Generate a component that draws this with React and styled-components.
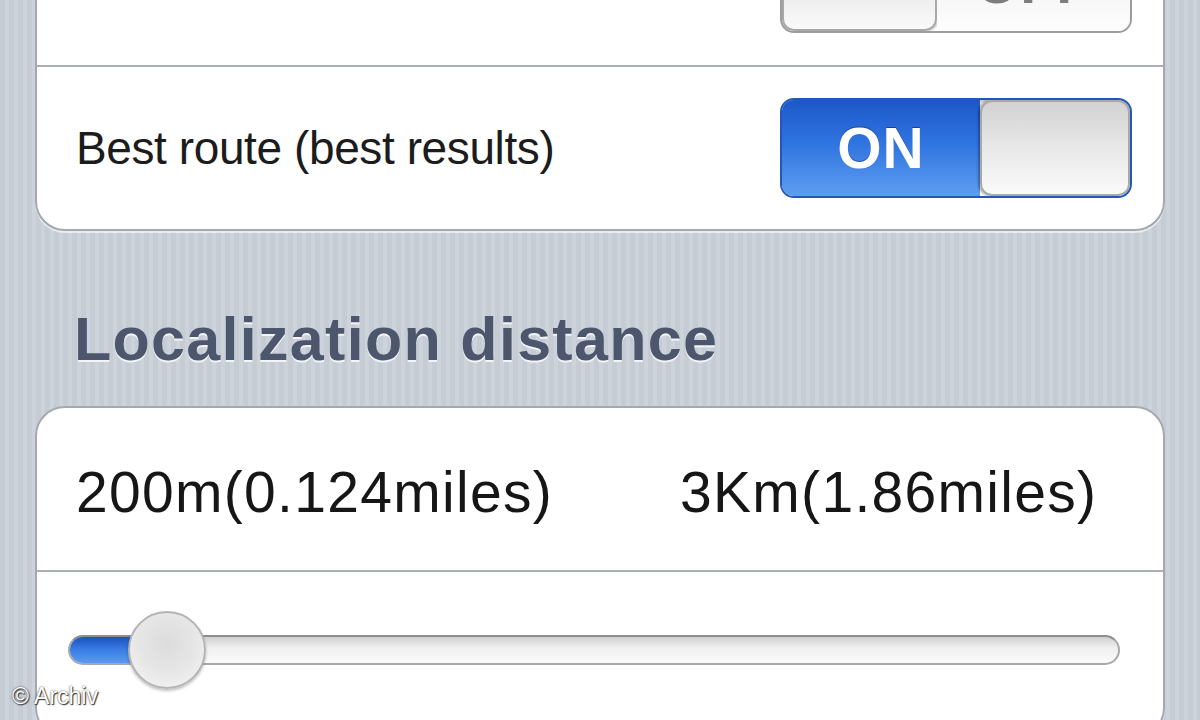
import React from 'react';
import styled, { createGlobalStyle } from 'styled-components';

const GlobalStyle = createGlobalStyle`
  html, body {
    margin: 0;
    padding: 0;
  }
  body {
    font-family: "Liberation Sans", Arial, sans-serif;
    background: #c8cfd7;
  }
`;

// pinstripe table background like the old iOS grouped settings
const Screen = styled.div`
  position: relative;
  width: 1200px;
  height: 720px;
  overflow: hidden;
  background: repeating-linear-gradient(
    90deg,
    #c5ccd4 0px,
    #c5ccd4 5px,
    #cdd3da 5px,
    #cdd3da 9px
  );
`;

const Column = styled.div`
  display: flex;
  flex-direction: column;
  padding: 0 35px;
  margin-top: -101px;
`;

const Card = styled.div`
  background: #fff;
  border: 2px solid #a4a9b0;
  border-radius: 30px;
  box-shadow: 0 2px 0 rgba(255, 255, 255, 0.6);
  overflow: hidden;
`;

const Row = styled.div`
  display: flex;
  align-items: center;
  justify-content: space-between;
  height: ${p => p.$h || 162}px;
  padding: 0 31px 0 39px;
  border-top: ${p => (p.$first ? 'none' : '2px solid #acb0b5')};
`;

const Label = styled.span`
  font-size: 46px;
  letter-spacing: -0.4px;
  color: #1c1c1c;
  transform: translateY(${p => p.$dy || 0}px);
`;

const SwitchBox = styled.div`
  display: flex;
  width: 352px;
  height: 100px;
  border-radius: 14px;
  overflow: hidden;
  box-sizing: border-box;
  border: 2px solid ${p => (p.$on ? '#2458b8' : '#9c9c9c')};
  flex-direction: ${p => (p.$on ? 'row' : 'row-reverse')};
  box-shadow: inset 0 2px 3px rgba(0, 0, 0, 0.25);
`;

const SwitchSide = styled.div`
  flex: 1;
  display: flex;
  align-items: center;
  justify-content: center;
  font-size: 57px;
  font-weight: bold;
  letter-spacing: 1px;
  color: ${p => (p.$on ? '#fff' : '#7d7d7d')};
  background: ${p =>
    p.$on
      ? 'linear-gradient(180deg, #1d58c9 0%, #2f74e0 45%, #5e9df0 100%)'
      : 'linear-gradient(180deg, #e6e6e6 0%, #f4f4f4 50%, #fdfdfd 100%)'};
  text-shadow: ${p => (p.$on ? '0 -1px 0 rgba(0,0,50,0.4)' : 'none')};
`;

const SwitchKnob = styled.div`
  width: ${p => p.$w}px;
  flex: none;
  box-sizing: border-box;
  border-radius: 12px;
  border: 2px solid #a8a8a8;
  background: linear-gradient(180deg, #d2d2d2 0%, #e8e8e8 50%, #fafafa 100%);
  box-shadow: ${p => (p.$on ? '-2px 0 2px rgba(0,0,0,0.3)' : '2px 0 2px rgba(0,0,0,0.2)')};
`;

const Toggle = ({ on }) => (
  <SwitchBox $on={on}>
    <SwitchSide $on={on}>{on ? 'ON' : 'OFF'}</SwitchSide>
    <SwitchKnob $on={on} $w={on ? 150 : 155} />
  </SwitchBox>
);

const SectionTitle = styled.h2`
  margin: 73px 0 32px 39px;
  font-size: 61px;
  line-height: 70px;
  font-weight: bold;
  letter-spacing: 1.3px;
  color: #4c566c;
  text-shadow: 0 2px 0 #f2f4f6;
`;

const RangeRow = styled.div`
  display: grid;
  grid-template-columns: 604px 1fr;
  align-items: center;
  height: 162px;
  padding: 0 0 0 39px;
`;

const RangeText = styled.span`
  font-size: 57px;
  letter-spacing: 1.3px;
  color: #161616;
  transform: translateY(3px);
`;

const SliderRow = styled.div`
  display: flex;
  align-items: flex-start;
  height: 164px;
  padding: 0 0 0 31px;
  border-top: 2px solid #acb0b5;
`;

const Track = styled.div`
  position: relative;
  margin-top: 63px;
  width: 1052px;
  height: 30px;
  box-sizing: border-box;
  border-radius: 15px;
  border: 2px solid #a9a9a9;
  border-top-color: #8e8e8e;
  background: linear-gradient(180deg, #cfcfcf 0%, #efefef 40%, #fbfbfb 100%);
`;

const Fill = styled.div`
  height: 100%;
  border-radius: 15px 0 0 15px;
  background: linear-gradient(180deg, #1c52bf 0%, #3a7ee6 50%, #5b9af0 100%);
`;

// knob sits over the track
const Thumb = styled.div`
  position: absolute;
  top: -26px;
  width: 78px;
  height: 78px;
  margin-left: -39px;
  box-sizing: border-box;
  border-radius: 50%;
  border: 2px solid #b4b4b4;
  background: radial-gradient(circle at 50% 40%, #dcdcdc 0%, #e6e6e6 50%, #f7f7f7 100%);
  box-shadow: 0 2px 3px rgba(0, 0, 0, 0.25);
`;

const Credit = styled.div`
  position: absolute;
  left: 12px;
  bottom: 10px;
  font-size: 23px;
  color: #fff;
  text-shadow: 0 0 2px #333, 1px 1px 1px #333;
`;

export default function App() {
  const sliderPos = 97;
  return (
    <Screen>
      <GlobalStyle />
      <Column>
        <Card>
          <Row $first $h={164}>
            <Label $dy={-2}>Power stations</Label>
            <Toggle on={false} />
          </Row>
          <Row>
            <Label>Best route (best results)</Label>
            <Toggle on />
          </Row>
        </Card>
        <SectionTitle>Localization distance</SectionTitle>
        <Card>
          <RangeRow>
            <RangeText>200m(0.124miles)</RangeText>
            <RangeText>3Km(1.86miles)</RangeText>
          </RangeRow>
          <SliderRow>
            <Track>
              <Fill style={{ width: sliderPos - 10 }} />
              <Thumb style={{ left: sliderPos }} />
            </Track>
          </SliderRow>
        </Card>
      </Column>
      <Credit>© Archiv</Credit>
    </Screen>
  );
}
